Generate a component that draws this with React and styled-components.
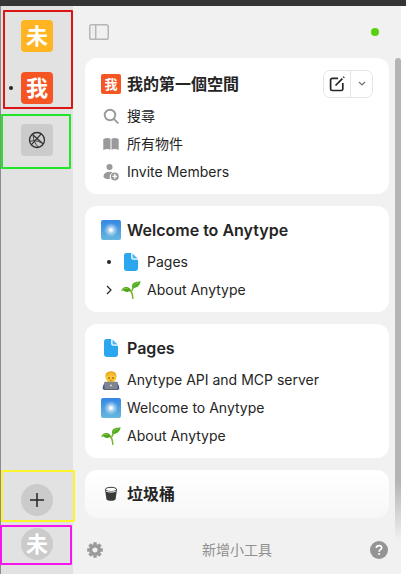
import styled, { createGlobalStyle, css } from 'styled-components'

const colors = {
    text: '#252525',
    muted: '#909090',
    icon: '#9a9a9a',
    rail: '#e2e2e2',
    panel: '#f1f1f1',
    line: '#e6e6e6',
}

const GlobalStyle = createGlobalStyle`
    * {
        box-sizing: border-box;
    }

    body {
        margin: 0;
        background: white;
        color: ${colors.text};
        font-family: Inter, 'Noto Sans CJK TC', sans-serif;
        font-size: 14px;
        line-height: 20px;
    }
`

// Page shell
const Shell = styled.div`
    display: flex;
    min-height: 100vh;
    border-top: 6px solid #353535;
`

const buttonReset = css`
    display: flex;
    align-items: center;
    justify-content: center;
    padding: 0;
    border: 0;
    background: none;
    color: inherit;
    font: inherit;
    cursor: pointer;
`

// Vault rail
const Rail = styled.nav`
    display: flex;
    flex-direction: column;
    flex: 0 0 73px;
    padding: 14px 0;
    border-left: 1px solid #8c8c8c;
    background: ${colors.rail};
`

const RailGroup = styled.div`
    position: relative;
    display: flex;
    flex-direction: column;
    align-items: center;
    gap: 20px;
    margin-top: ${(props) => props.$top || '0'};
`

const Outline = styled.span`
    position: absolute;
    inset: ${(props) => props.$inset};
    z-index: 1;
    border: 2px solid ${(props) => props.$color};
    border-radius: 1px;
    pointer-events: none;
`

const SpaceButton = styled.button`
    ${buttonReset}
    position: relative;
    width: 32px;
    height: 32px;
    border-radius: ${(props) => (props.$round ? '50%' : '4px')};
    background: ${(props) => props.$bg};
    color: ${(props) => props.$fg || 'white'};
    font-size: 22px;
    font-weight: 700;
    line-height: 32px;

    ${(props) =>
        props.$active &&
        `
        &::before {
            content: '';
            position: absolute;
            left: -12px;
            top: 14px;
            width: 4px;
            height: 4px;
            border-radius: 50%;
            background: ${colors.text};
        }
    `}
`

// Sidebar panel
const Panel = styled.main`
    flex: 1;
    display: grid;
    grid-template-columns: minmax(0, 1fr) 12px;
    grid-template-rows: 52px 1fr auto;
    padding-left: 12px;
    border-right: 5px solid white;
    background: ${colors.panel};
`

const Header = styled.header`
    display: flex;
    align-items: center;
    justify-content: space-between;
    padding: 0 10px 0 4px;
`

const PlainButton = styled.button`
    ${buttonReset}
    color: ${(props) => props.$color || colors.icon};
`

const Status = styled.span`
    width: 8px;
    height: 8px;
    border-radius: 50%;
    background: #57d10b;
`

const Cards = styled.div`
    grid-column: 1;
    display: flex;
    flex-direction: column;
    gap: 12px;
`

const Card = styled.section`
    padding: 8px 16px;
    border-radius: 12px;
    background: ${(props) => (props.$faded ? 'linear-gradient(white, #f7f7f7)' : 'white')};
`

const CardHead = styled.div`
    display: flex;
    align-items: center;
    gap: 6px;
    min-height: ${(props) => (props.$tall ? '36px' : '32px')};
`

const Title = styled.h2`
    flex: 1;
    margin: 0;
    font-size: 16px;
    font-weight: 600;
    line-height: 24px;
    white-space: nowrap;

    &:lang(zh) {
        font-weight: 700;
    }
`

const List = styled.ul`
    margin: ${(props) => (props.$spaced ? '2px 0 0' : '0')};
    padding: 0;
    list-style: none;
`

const Item = styled.li`
    display: flex;
    align-items: center;
    gap: 4px;
    height: 28px;
`

const ItemLink = styled.a`
    display: flex;
    align-items: center;
    gap: 6px;
    color: inherit;
    text-decoration: none;
    white-space: nowrap;
`

const Marker = styled.span`
    display: flex;
    justify-content: center;
    flex: 0 0 16px;
`

const Slot = styled.span`
    display: flex;
    align-items: center;
    justify-content: center;
    flex: 0 0 20px;
    height: 20px;
    color: ${colors.icon};
`

const SpaceBadge = styled(Slot)`
    border-radius: 2px;
    background: #f55522;
    color: white;
    font-size: 13px;
    font-weight: 700;
`

const SkyTile = styled(Slot)`
    border-radius: 2px;
    background:
        radial-gradient(circle, #ffffff 6%, rgba(255, 255, 255, 0.5) 22%, transparent 50%),
        linear-gradient(#3487e2, #67b7df);
`

const Bullet = styled.span`
    width: 4px;
    height: 4px;
    border-radius: 50%;
    background: ${colors.text};
`

const SplitButton = styled.div`
    display: flex;
    height: 28px;
    border: 1px solid ${colors.line};
    border-radius: 7px;

    button {
        width: 26px;
    }

    button + button {
        width: 22px;
        border-left: 1px solid ${colors.line};
    }
`

const Thumb = styled.div`
    grid-column: 2;
    grid-row: 2 / 4;
    justify-self: end;
    width: 6px;
    margin-bottom: 33px;
    border-radius: 3px 3px 0 0;
    background: linear-gradient(#b4b4b4 calc(100% - 60px), ${colors.panel});
`

const Footer = styled.footer`
    grid-column: 1;
    display: grid;
    grid-template-columns: 20px 1fr 20px;
    align-items: center;
    padding: 22px 0 14px;
`

// Icons
const PanelIcon = () => (
    <svg width="20" height="16" viewBox="0 0 20 16" fill="none" stroke="#b6b6b6" strokeWidth="1.5">
        <rect x=".75" y=".75" width="18.5" height="14.5" rx="1.8" />
        <path d="M6.7 1v14" />
        <path d="M3 4h1.5M3 6.5h1.5M3 9h1.5" strokeWidth=".7" opacity=".5" />
    </svg>
)

const GraphIcon = () => (
    <svg width="18" height="18" viewBox="0 0 18 18" fill="none" stroke="#303030" strokeWidth="1.3">
        <circle cx="9" cy="9" r="7.5" />
        <path d="M4.2 3.3 15.2 13M13.2 2.9 3.2 13.8" strokeWidth="1.2" />
        <path d="M1.8 10.4C5 9.2 9.5 9.6 13.4 11.6M5.2 4.4C5.2 9 7 12.8 10.4 16.2" strokeWidth=".9" />
    </svg>
)

const PlusIcon = () => (
    <svg width="14" height="14" viewBox="0 0 14 14" stroke="currentColor" strokeWidth="1.5">
        <path d="M7 0v14M0 7h14" />
    </svg>
)

const EditIcon = () => (
    <svg width="16" height="16" viewBox="0 0 16 16" fill="none" stroke={colors.text} strokeWidth="1.7">
        <path d="M9 2.3H3.2a1.6 1.6 0 0 0-1.6 1.6v9a1.6 1.6 0 0 0 1.6 1.6h9a1.6 1.6 0 0 0 1.6-1.6V7" />
        <path d="M6.5 9.5 13.4 2.6" />
        <path d="M14.3 1.7 15.2.8" />
    </svg>
)

const ChevronDown = () => (
    <svg width="8" height="6" viewBox="0 0 8 6" fill="none" stroke="#707070" strokeWidth="1.2">
        <path d="m1 1 3 3 3-3" />
    </svg>
)

const ChevronRight = () => (
    <svg width="6" height="10" viewBox="0 0 6 10" fill="none" stroke={colors.text} strokeWidth="1.2">
        <path d="m1 1 4 4-4 4" />
    </svg>
)

const SearchIcon = () => (
    <svg width="16" height="16" viewBox="0 0 16 16" fill="none" stroke="currentColor" strokeWidth="1.9">
        <circle cx="7" cy="7" r="5.3" />
        <path d="m10.8 10.8 4 4" strokeLinecap="round" />
    </svg>
)

const BookIcon = () => (
    <svg width="16" height="14" viewBox="0 0 16 14" fill="currentColor">
        <path d="M.3 2.3C2.4.7 5.2.6 7.5 1.8v10.9C5.2 11.7 2.6 11.7.3 13V2.3Z" />
        <path d="M15.7 2.3C13.6.7 10.8.6 8.5 1.8v10.9c2.3-1 4.9-1 7.2.3V2.3Z" />
    </svg>
)

const InviteIcon = () => (
    <svg width="18" height="18" viewBox="0 0 18 18" fill="currentColor">
        <circle cx="7.5" cy="4" r="3" />
        <path d="M1.5 13.2C1.7 10.4 4 8.8 7.5 8.8c1.3 0 2.3.2 3.2.6a4.8 4.8 0 0 0-2.6 6.6c-3.6.1-6.7-.5-6.6-2.8Z" />
        <path d="M12.8 9.4a4 4 0 1 0 0 8 4 4 0 0 0 0-8Zm.7 1.7v1.6h1.6v1.4h-1.6v1.6h-1.4v-1.6h-1.6v-1.4h1.6v-1.6h1.4Z" fillRule="evenodd" />
    </svg>
)

const PageIcon = () => (
    <svg width="14" height="18" viewBox="0 0 14 18">
        <path d="M2.4 0H7.2v4.6c0 1.5.7 2.2 2.2 2.2H14v8.8a2.4 2.4 0 0 1-2.4 2.4H2.4A2.4 2.4 0 0 1 0 15.6V2.4A2.4 2.4 0 0 1 2.4 0Z" fill="#2aa7ee" />
        <path d="M8.5.4 13.6 5.5H9.5c-.7 0-1-.3-1-1V.4Z" fill="#4db5f0" />
    </svg>
)

const SeedlingIcon = () => (
    <svg width="20" height="18" viewBox="0 0 20 18">
        <path d="M11.8 17.3c-.1-3.9-.9-6.3-2.8-8.2M11.1 9.3c.4-1.9 1.5-3.3 3.2-4.5" fill="none" stroke="#79b52c" strokeWidth="1.5" strokeLinecap="round" />
        <path d="M.2 9.7c1.2-3 3.2-4.1 5.8-3.6 2.3.4 3.5 1.8 3.5 3.3-2 1.9-5.4 2-6.9.1L.2 9.7Z" fill="#4fa51c" />
        <path d="M11.2 6.7c-.8-2.7.4-4.7 3-5.5 1.8-.6 3.7-.4 5.4-.9-.4 3.9-3.7 7.4-8.4 6.4Z" fill="#51ad20" />
        <path d="M1.3 8.7c1.6-1.4 3.5-1.7 5.6-1.2M12.3 5.1c1.2-1.9 3-2.9 5.1-3.3" fill="none" stroke="#87ca43" />
    </svg>
)

const TechnologistIcon = () => (
    <svg width="18" height="19" viewBox="0 0 18 19">
        <path d="M.8 18.5c-.2-4.4 1.1-6.5 4.4-7.3h7.6c3.3.8 4.6 2.9 4.4 7.3H.8Z" fill="#3b4c9b" />
        <path d="M3.6 6.4C3 2.4 5 .4 8.2.4c3.9-.4 6.6 1.6 6.2 6l-.6 2.2H4.2l-.6-2.2Z" fill="#e8a51b" />
        <ellipse cx="9" cy="6.8" rx="5" ry="5" fill="#fcc735" />
        <path d="M4.4 5.1c2.6.1 3.9-.7 4.8-1.8.9 1 2.2 1.7 4.3 1.8C13.3 2.6 11.7 1.2 9 1.2S4.6 2.6 4.4 5.1Z" fill="#f3b62c" />
        <circle cx="7" cy="7" r=".8" fill="#553a17" />
        <circle cx="11" cy="7" r=".8" fill="#553a17" />
        <path d="M7.5 9.3h3" stroke="#a8651a" strokeWidth=".7" />
        <path d="M3 10.7h12a.9.9 0 0 1 .9.9l-.5 6.9H2.6l-.5-6.9a.9.9 0 0 1 .9-.9Z" fill="#7f8491" />
        <circle cx="9" cy="14.6" r="1" fill="#d6d9df" />
        <path d="M2 18h14v1H2z" fill="#5d626e" />
    </svg>
)

const BinIcon = () => (
    <svg width="14" height="16" viewBox="0 0 14 16">
        <path d="M1 3.5 2.4 13c.2 1.2 2 1.8 4.6 1.8s4.4-.6 4.6-1.8L13 3.5H1Z" fill="#393939" />
        <ellipse cx="7" cy="3.4" rx="5.6" ry="2.1" fill="white" stroke="#393939" strokeWidth="1" />
        <path d="M2 4.5c1.2 1.3 8.8 1.3 10 0l-.3 1.3c-1.8.9-7.6.9-9.4 0L2 4.5Z" fill="white" />
    </svg>
)

const GearIcon = () => (
    <svg width="16" height="16" viewBox="-8 -8 16 16" fill="none" stroke="currentColor">
        <circle r="4.3" strokeWidth="3.4" />
        {[0, 45, 90, 135].map((angle) => (
            <path
                key={angle}
                d="M0-7.8v2.6M0 5.2v2.6"
                strokeWidth="3.4"
                transform={`rotate(${angle})`}
            />
        ))}
    </svg>
)

const HelpIcon = () => (
    <svg width="18" height="18" viewBox="0 0 18 18" fill="none">
        <circle cx="9" cy="9" r="9" fill="#949494" />
        <path d="M6.3 7C6.3 5.4 7.4 4.6 9 4.6s2.7.8 2.7 2.2c0 1.8-2.6 1.9-2.6 4" stroke="white" strokeWidth="1.6" />
        <circle cx="9.1" cy="13.1" r="1" fill="white" />
    </svg>
)

const spaceLinks = [
    { icon: <SearchIcon />, label: '搜尋', lang: 'zh-Hant' },
    { icon: <BookIcon />, label: '所有物件', lang: 'zh-Hant' },
    { icon: <InviteIcon />, label: 'Invite Members' },
]

const treeLinks = [
    { marker: <Bullet />, icon: <PageIcon />, label: 'Pages' },
    { marker: <ChevronRight />, icon: <SeedlingIcon />, label: 'About Anytype' },
]

const pageLinks = [
    { icon: <TechnologistIcon />, label: 'Anytype API and MCP server' },
    { tile: true, label: 'Welcome to Anytype' },
    { icon: <SeedlingIcon />, label: 'About Anytype' },
]

function LinkList({ items, spaced }) {
    return (
        <List $spaced={spaced}>
            {items.map((item) => (
                <Item key={item.label}>
                    {item.marker && <Marker>{item.marker}</Marker>}
                    <ItemLink href="#" lang={item.lang}>
                        {item.tile ? <SkyTile /> : <Slot>{item.icon}</Slot>}
                        {item.label}
                    </ItemLink>
                </Item>
            ))}
        </List>
    )
}

function SpaceRail() {
    return (
        <Rail lang="zh-Hant">
            <RailGroup>
                <SpaceButton $bg="#ffb522">未</SpaceButton>
                <SpaceButton $bg="#f55522" $active>
                    我
                </SpaceButton>
                <Outline $color="#dc1414" $inset="-10px 0 -5px 2px" />
            </RailGroup>
            <RailGroup $top="20px">
                <SpaceButton $bg="#cbcbcb" aria-label="Graph">
                    <GraphIcon />
                </SpaceButton>
                <Outline $color="#20e52b" $inset="-10px 2px -13px 0" />
            </RailGroup>
            <RailGroup $top="auto">
                <SpaceButton $bg="#cbcbcb" $fg={colors.text} $round aria-label="Add space">
                    <PlusIcon />
                </SpaceButton>
                <Outline $color="#fbf32b" $inset="-14px -2px -6px 0" />
            </RailGroup>
            <RailGroup $top="12px">
                <SpaceButton $bg="#cbcbcb" $round>
                    未
                </SpaceButton>
                <Outline $color="#f416ec" $inset="-3px 1px -5px -1px" />
            </RailGroup>
        </Rail>
    )
}

function App() {
    return (
        <>
            <GlobalStyle />
            <Shell>
                <SpaceRail />
                <Panel>
                    <Header>
                        <PlainButton aria-label="Toggle sidebar">
                            <PanelIcon />
                        </PlainButton>
                        <Status />
                    </Header>

                    <Cards>
                        <Card>
                            <CardHead $tall>
                                <SpaceBadge lang="zh-Hant">我</SpaceBadge>
                                <Title lang="zh-Hant">我的第一個空間</Title>
                                <SplitButton>
                                    <PlainButton aria-label="New object">
                                        <EditIcon />
                                    </PlainButton>
                                    <PlainButton aria-label="Choose type">
                                        <ChevronDown />
                                    </PlainButton>
                                </SplitButton>
                            </CardHead>
                            <LinkList items={spaceLinks} />
                        </Card>

                        <Card>
                            <CardHead>
                                <SkyTile />
                                <Title>Welcome to Anytype</Title>
                            </CardHead>
                            <LinkList items={treeLinks} spaced />
                        </Card>

                        <Card>
                            <CardHead>
                                <Slot>
                                    <PageIcon />
                                </Slot>
                                <Title>Pages</Title>
                            </CardHead>
                            <LinkList items={pageLinks} spaced />
                        </Card>

                        <Card $faded>
                            <CardHead>
                                <Slot>
                                    <BinIcon />
                                </Slot>
                                <Title lang="zh-Hant">垃圾桶</Title>
                            </CardHead>
                        </Card>
                    </Cards>

                    <Thumb />

                    <Footer>
                        <PlainButton aria-label="Settings">
                            <GearIcon />
                        </PlainButton>
                        <PlainButton $color={colors.muted} lang="zh-Hant">
                            新增小工具
                        </PlainButton>
                        <PlainButton aria-label="Help">
                            <HelpIcon />
                        </PlainButton>
                    </Footer>
                </Panel>
            </Shell>
        </>
    )
}

export default App
